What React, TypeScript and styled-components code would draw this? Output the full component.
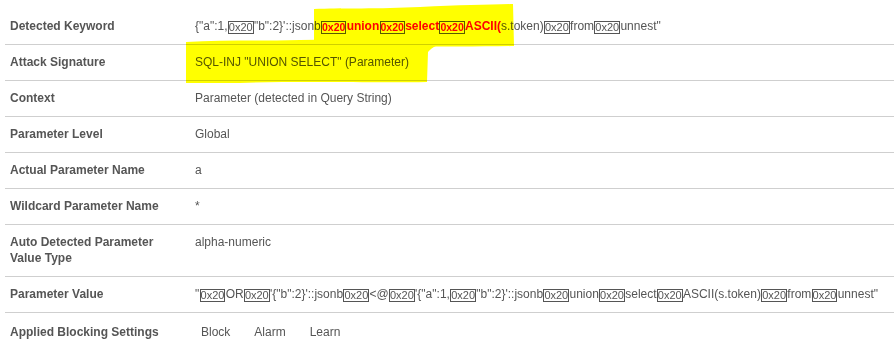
import React from "react";
import styled, { createGlobalStyle } from "styled-components";

const Global = createGlobalStyle`
  html, body { margin: 0; padding: 0; background: #fff; }
  body { font-family: "Liberation Sans", Arial, sans-serif; }
`;

const Page = styled.div`
  position: relative;
  padding: 9px 0 0 5px;
`;

const Table = styled.div`
  display: flex;
  flex-direction: column;
`;

const Row = styled.div<{ $last?: boolean }>`
  display: grid;
  grid-template-columns: 185px 1fr;
  border-bottom: ${(p) => (p.$last ? "none" : "1px solid #cfcfcf")};
`;

const Label = styled.div<{ $low?: boolean }>`
  padding: ${(p) => (p.$low ? "11px" : "9px")} 5px 10px 5px;
  font-size: 12px;
  line-height: 16px;
  font-weight: bold;
  color: #555;
`;

const Value = styled.div`
  padding: 9px 5px 10px 5px;
  font-size: 12px;
  line-height: 16px;
  color: #555;
  white-space: nowrap;
`;

const Box = styled.span<{ $hot?: boolean }>`
  display: inline-block;
  border: 1px solid ${(p) => (p.$hot ? "#5a5a2a" : "#555")};
  font-size: ${(p) => (p.$hot ? "10.5px" : "11px")};
  line-height: 11px;
  font-weight: ${(p) => (p.$hot ? "bold" : "normal")};
  color: ${(p) => (p.$hot ? "#f00" : "#555")};
  vertical-align: -1px;
  padding: 0;
  margin: 0 0.25px;
`;

const Hot = styled.span`
  color: #f00;
  font-weight: bold;
`;

const Settings = styled.div`
  display: flex;
  gap: 24px;
  padding: 11px 0 0 11px;
  font-size: 12px;
  line-height: 16px;
  color: #555;
`;

const Marker = styled.svg`
  position: absolute;
  left: 0;
  top: 0;
  width: 894px;
  height: 354px;
  pointer-events: none;
  mix-blend-mode: multiply;
`;

const Sp = () => <Box>0x20</Box>;
const HotSp = () => <Box $hot>0x20</Box>;

export default function App() {
  return (
    <>
      <Global />
      <Page>
        <Table>
          <Row>
            <Label>Detected Keyword</Label>
            <Value>
              {'{"a":1,'}
              <Sp />
              {'"b":2}\'::jsonb'}
              <HotSp />
              <Hot>union</Hot>
              <HotSp />
              <Hot>select</Hot>
              <HotSp />
              <Hot>ASCII(</Hot>
              {"s.token)"}
              <Sp />
              {"from"}
              <Sp />
              {'unnest"'}
            </Value>
          </Row>
          <Row>
            <Label>Attack Signature</Label>
            <Value>SQL-INJ "UNION SELECT" (Parameter)</Value>
          </Row>
          <Row>
            <Label>Context</Label>
            <Value>Parameter (detected in Query String)</Value>
          </Row>
          <Row>
            <Label>Parameter Level</Label>
            <Value>Global</Value>
          </Row>
          <Row>
            <Label>Actual Parameter Name</Label>
            <Value>a</Value>
          </Row>
          <Row>
            <Label>Wildcard Parameter Name</Label>
            <Value>*</Value>
          </Row>
          <Row>
            <Label>
              Auto Detected Parameter
              <br />
              Value Type
            </Label>
            <Value>alpha-numeric</Value>
          </Row>
          <Row>
            <Label>Parameter Value</Label>
            <Value>
              {'"'}
              <Sp />
              {"OR"}
              <Sp />
              {'\'{"b":2}\'::jsonb'}
              <Sp />
              {"<@"}
              <Sp />
              {'\'{"a":1,'}
              <Sp />
              {'"b":2}\'::jsonb'}
              <Sp />
              {"union"}
              <Sp />
              {"select"}
              <Sp />
              {"ASCII(s.token)"}
              <Sp />
              {"from"}
              <Sp />
              {'unnest"'}
            </Value>
          </Row>
          <Row $last>
            <Label $low>Applied Blocking Settings</Label>
            <Settings>
              <span>Block</span>
              <span>Alarm</span>
              <span>Learn</span>
            </Settings>
          </Row>
        </Table>
        <Marker viewBox="0 0 894 354">
          <path
            d="M314,9 C340,8 380,9 420,7 C460,5 490,5 513,4 L514,46 C480,47 440,46 400,47 L314,47 Z"
            fill="#ffff00"
          />
          <path
            d="M186,42 C220,40 260,41 300,40 C360,39 410,41 447,41 C440,44 432,47 428,52 L427,82 C380,83 300,81 240,83 L186,83 Z"
            fill="#ffff00"
          />
        </Marker>
      </Page>
    </>
  );
}
